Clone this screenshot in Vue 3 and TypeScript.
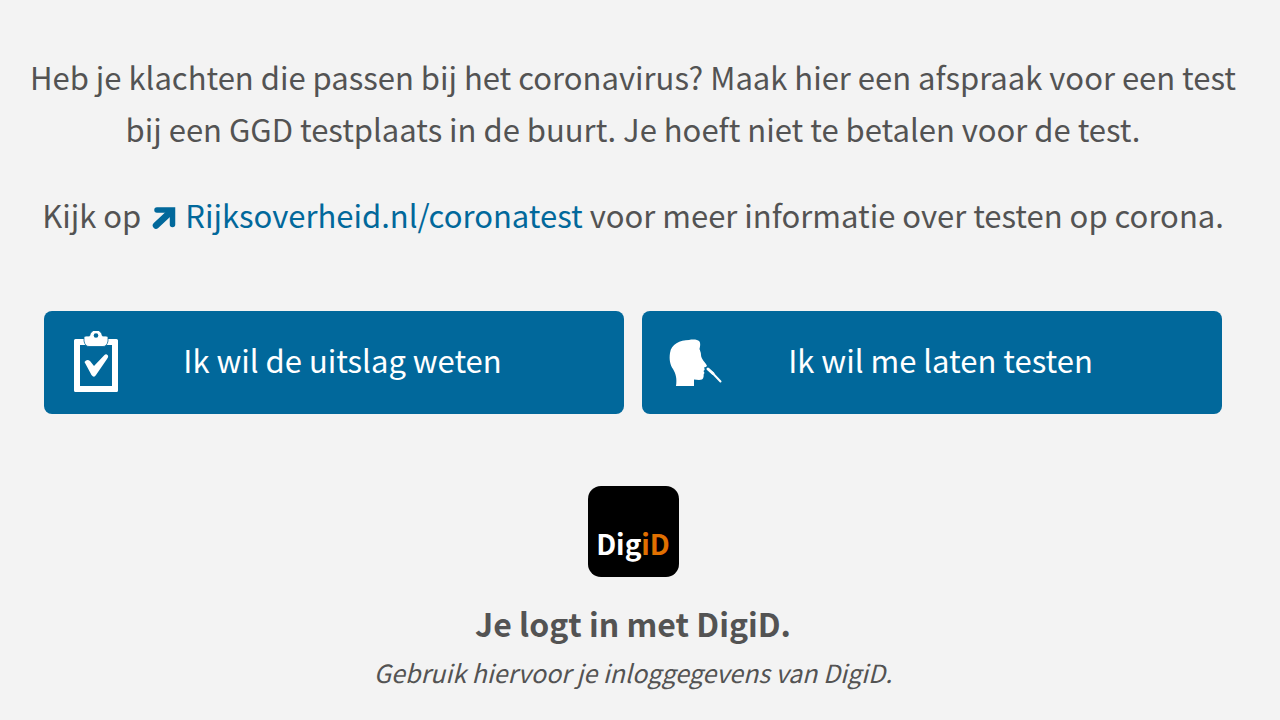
<script setup lang="ts">
const portalUrl: string = '#coronatest'
</script>

<template>
  <main class="page">
    <p class="intro">
      Heb je klachten die passen bij het coronavirus? Maak hier een afspraak voor een test
      bij een GGD testplaats in de buurt. Je hoeft niet te betalen voor de test.
    </p>
    <p class="intro">
      Kijk op
      <a class="link" :href="portalUrl"><svg class="arrow" viewBox="0 0 24 24" aria-hidden="true">
          <path d="M5 4H20.500V18.500" fill="none" stroke="currentColor" stroke-width="5.500" stroke-linecap="round" />
          <path d="M4 19.500L19 5.500" fill="none" stroke="currentColor" stroke-width="6.500" stroke-linecap="round" />
        </svg>Rijksoverheid.nl/coronatest</a>
      voor meer informatie over testen op corona.
    </p>

    <div class="actions">
      <button type="button" class="action">
        <svg class="icon" viewBox="0 0 56 64" aria-hidden="true">
          <path fill="#fff" fill-rule="evenodd" d="M5 9.500Q5 8 6.500 8H47.500Q49 8 49 9.500V59.500Q49 61 47.500 61H6.500Q5 61 5 59.500ZM11 14V55H43V14Z" />
          <path fill="#fff" stroke="#01689b" stroke-width=".8" fill-rule="evenodd" d="M15 6.500Q15 5 17 5H20.500Q22-1 27-1Q32-1 33.500 5H37Q39 5 39 6.500V10Q38 15.500 34 15.500H20Q16 15.500 15 10Z" />
          <circle cx="27" cy="4.500" r="2.300" fill="#01689b" />
          <path fill="#fff" d="M15.500 31Q18 27.500 21 30L25 35L35 24.500Q37 22.500 38.500 24Q40 25.500 38 28L27 44Q25 47.500 22.500 44Z" />
        </svg>
        <span class="label">Ik wil de uitslag weten</span>
      </button>
      <button type="button" class="action">
        <svg class="icon" viewBox="0 0 56 64" aria-hidden="true">
          <path fill="#fff" d="M9 55C10 48 9 43 6 38C3 34 2 28 3 22C4 13 13 9 22 9C27 8 31 9 32 10C34 12 33 16 32.500 18C33 20 34 21 34 24C34 28 39 32 40 35Q39 36 37 36.500Q38 38 37.500 39L36.500 40L37.500 42C36 43 37 45 36.500 46C36 50 31 49 27 48.500V55Z" />
          <path fill="none" stroke="#fff" stroke-width="3" stroke-linecap="round" d="M41 38L46 42.500" />
          <path fill="none" stroke="#fff" stroke-width="2" stroke-linecap="round" d="M45 41.500L53.500 50.500" />
        </svg>
        <span class="label">Ik wil me laten testen</span>
      </button>
    </div>

    <section class="login">
      <div class="logo"><span>Dig<span class="orange">iD</span></span></div>
      <h2>Je logt in met DigiD.</h2>
      <p class="hint">Gebruik hiervoor je inloggegevens van DigiD.</p>
    </section>
  </main>
</template>

<style>
body {
  background: #f3f3f3;
}
</style>

<style scoped>
.page {
  box-sizing: border-box;
  padding: 51px 38px 16px 24px;
  color: #535353;
  font-family: "Noto Sans CJK SC", "Noto Sans", sans-serif;
  text-align: center;
}
.intro {
  margin: 0 0 34px;
  font-size: 31px;
  line-height: 52px;
}
.link {
  color: #01689b;
  text-decoration: none;
}
.arrow {
  width: 24px;
  height: 24px;
  margin: 0 9px 0 4px;
  vertical-align: -2px;
}
.actions {
  display: grid;
  grid-template-columns: 1fr 1fr;
  gap: 18px;
  margin: 70px 20px 72px;
}
.action {
  display: flex;
  align-items: center;
  height: 103px;
  padding: 0 10px 0 25px;
  border: 0;
  border-radius: 8px;
  background: #01689b;
  color: #fff;
  font: inherit;
  font-size: 31px;
  line-height: 52px;
  cursor: pointer;
}
.icon {
  flex: none;
  width: 56px;
  height: 64px;
}
.label {
  flex: 1;
  padding: 0 54px 6px 0;
}
.logo {
  box-sizing: border-box;
  width: 91px;
  height: 91px;
  margin: 0 auto;
  padding-top: 38px;
  border-radius: 13px;
  background: #000;
  color: #fff;
  font-size: 28px;
  font-weight: 700;
  line-height: 38px;
}
.orange {
  color: #e17000;
}
h2 {
  margin: 20px 0 0;
  font-size: 32px;
  font-weight: 700;
  line-height: 52px;
}
.hint {
  margin: 0;
  font-size: 25px;
  font-style: italic;
  line-height: 46px;
}
</style>
